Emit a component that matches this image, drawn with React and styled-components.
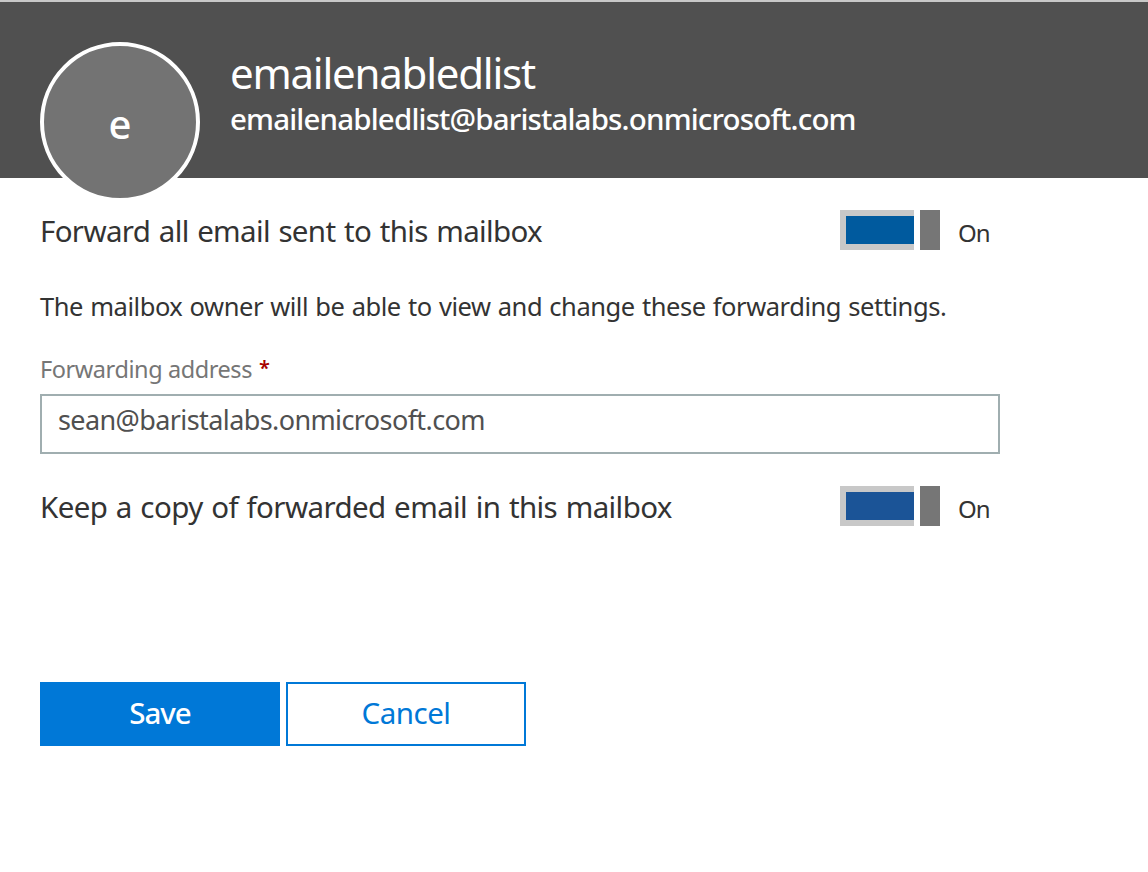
import React from "react";
import styled, { createGlobalStyle } from "styled-components";

const Global = createGlobalStyle`
  * { box-sizing: border-box; }
  body { margin: 0; background: #fff; font-family: "Noto Sans", "Open Sans", sans-serif; color: #333; overflow: hidden; }
`;

const Text = styled.span`
  display: block;
  width: max-content;
  white-space: nowrap;
  font-size: ${(p) => p.$size}px;
  line-height: ${(p) => p.$lh}px;
  letter-spacing: ${(p) => p.$ls || 0}px;
  word-spacing: ${(p) => p.$ws || 0}px;
  font-weight: ${(p) => p.$weight || 400};
`;

const Panel = styled.main`
  height: 872px;
`;

const Header = styled.header`
  display: flex;
  align-items: flex-start;
  height: 178px;
  padding: 40px 40px 0;
  gap: 30px;
  background: #505050;
  border-top: 2px solid #c8c8c8;
  color: #fff;
`;

const Avatar = styled.div`
  display: flex;
  flex: none;
  align-items: center;
  justify-content: center;
  width: 160px;
  height: 160px;
  padding-top: 4px;
  border: 4px solid #fff;
  border-radius: 50%;
  background: #737373;
`;

const Identity = styled.div`
  padding-top: 3px;
`;

const Form = styled.form`
  display: flex;
  flex-direction: column;
  width: 1040px;
  padding: 32px 40px 0;
`;

const Row = styled.div`
  display: flex;
  justify-content: space-between;
  width: 950px;
  height: 40px;
`;

const ToggleGroup = styled.div`
  display: flex;
  width: 150px;
  gap: 18px;
`;

const Toggle = styled.button`
  display: flex;
  gap: 6px;
  width: 100px;
  height: 40px;
  padding: 0;
  border: 0;
  background: transparent;
`;

const Track = styled.span`
  width: 74px;
  height: 40px;
  border: 6px solid #c8c8c8;
  border-right: 0;
  background: ${(p) => p.$color};
`;

const Thumb = styled.span`
  width: 20px;
  height: 40px;
  background: #767676;
`;

const Note = styled.p`
  margin: 36px 0 0;
`;

const Label = styled.label`
  display: flex;
  gap: 7px;
  height: 36px;
  margin-top: 24px;
  color: #767676;
`;

const Required = styled(Text)`
  color: #a80000;
`;

const Input = styled.input`
  width: 960px;
  height: 60px;
  margin: 8px 0 32px;
  padding: 0 16px 9px;
  border: 2px solid #a0aeb0;
  border-radius: 0;
  outline: 0;
  background: #fff;
  color: #505050;
  font: 27px "Noto Sans", sans-serif;
  letter-spacing: -0.6px;
`;

const Actions = styled.div`
  display: flex;
  gap: 6px;
  margin-top: 156px;
`;

const Button = styled.button`
  display: flex;
  justify-content: center;
  width: 240px;
  height: 64px;
  padding: 0;
  border: 2px solid #0078d7;
  background: ${(p) => (p.$primary ? "#0078d7" : "#fff")};
  color: ${(p) => (p.$primary ? "#fff" : "#0078d7")};
  font-family: inherit;
`;

function Setting({ label, color, spacing }) {
  return (
    <Row>
      <Text $size={29.5} $lh={41} $ls={spacing} $ws={1.5}>{label}</Text>
      <ToggleGroup>
        <Toggle type="button" role="switch" aria-checked="true" aria-label={label}>
          <Track $color={color} />
          <Thumb />
        </Toggle>
        <Text $size={24} $lh={46} $ls={-1}>On</Text>
      </ToggleGroup>
    </Row>
  );
}

export default function App() {
  return (
    <Panel>
      <Global />
      <Header>
        <Avatar><Text $size={40} $lh={44} $weight={500}>e</Text></Avatar>
        <Identity>
          <Text $size={42} $lh={56} $ls={-1.23}>emailenabledlist</Text>
          <Text $size={29.5} $lh={35} $ls={-0.84} $weight={500}>emailenabledlist@baristalabs.onmicrosoft.com</Text>
        </Identity>
      </Header>
      <Form>
        <Setting label="Forward all email sent to this mailbox" color="#005a9e" spacing={-0.65} />
        <Note><Text $size={25.5} $lh={40} $ls={-0.45} $ws={1}>The mailbox owner will be able to view and change these forwarding settings.</Text></Note>
        <Label htmlFor="address">
          <Text $size={23.5} $lh={38} $ls={-0.43}>Forwarding address</Text>
          <Required $size={20} $lh={36} $weight={600}>*</Required>
        </Label>
        <Input id="address" defaultValue="sean@baristalabs.onmicrosoft.com" />
        <Setting label="Keep a copy of forwarded email in this mailbox" color="#1b5497" spacing={-0.6} />
        <Actions>
          <Button type="button" $primary><Text $size={29.5} $lh={58} $ls={-1} $weight={500}>Save</Text></Button>
          <Button type="button"><Text $size={29.5} $lh={58} $ls={-0.5}>Cancel</Text></Button>
        </Actions>
      </Form>
    </Panel>
  );
}
